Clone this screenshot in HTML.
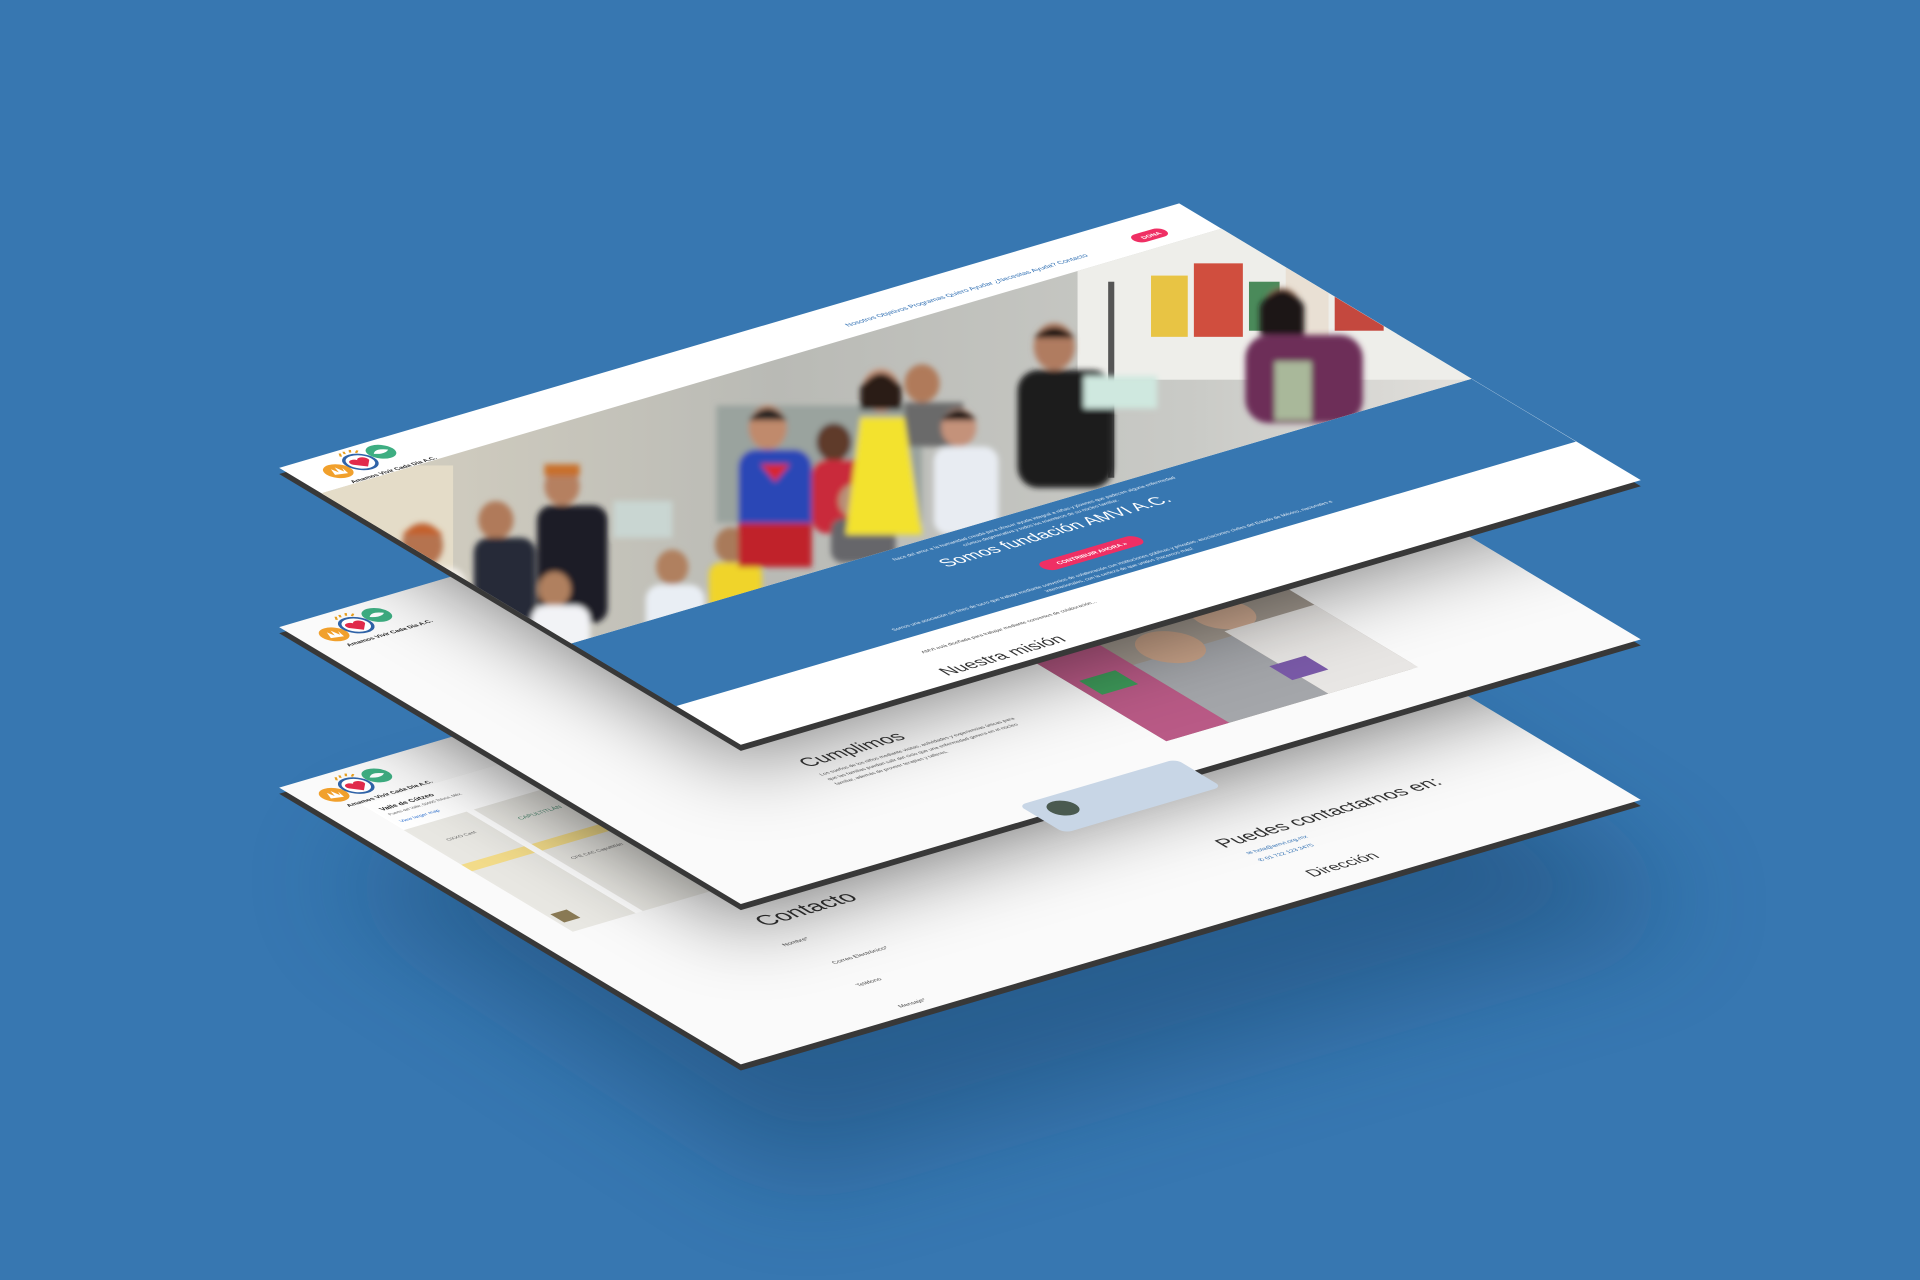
<!DOCTYPE html>
<html><head><meta charset="utf-8"><style>
html,body{margin:0;padding:0;width:1920px;height:1280px;overflow:hidden;background:#3777b1}
svg{display:block}
text{font-family:"Liberation Sans",sans-serif}
.nar{font-family:"Liberation Sans Narrow","Liberation Sans",sans-serif}
</style></head><body>
<svg width="1920" height="1280" viewBox="0 0 1568 1045" preserveAspectRatio="none" xmlns="http://www.w3.org/2000/svg">
<defs>
<filter id="b1" x="-30%" y="-30%" width="160%" height="160%"><feGaussianBlur stdDeviation="35"/></filter>
<filter id="b2" x="-30%" y="-30%" width="160%" height="160%"><feGaussianBlur stdDeviation="45"/></filter>
<filter id="b3"><feGaussianBlur stdDeviation="2"/></filter>
<clipPath id="cm"><polygon points="228,512 963,296 1340,522 605,738"/></clipPath>
<clipPath id="cb"><polygon points="228,643 963,427 1340,653 605,869"/></clipPath>
<clipPath id="cp"><polygon points="262.5,402.7 997.5,186.7 1201.6,309.3 466.6,525.3"/></clipPath>
<linearGradient id="ph" x1="0" y1="0" x2="1" y2="0"><stop offset="0" stop-color="#d8d2c2"/><stop offset=".4" stop-color="#b9bab5"/><stop offset=".75" stop-color="#c9cac6"/><stop offset="1" stop-color="#e2e0dc"/></linearGradient>
<g id="logo">
 <circle cx="22" cy="26" r="13" fill="#f1a02c"/>
 <path d="M15 30 l4 -10 l2 8 l3 -9 l2 10 l3 -6 l-2 10z" fill="#fff"/>
 <circle cx="50" cy="22" r="14" fill="#fff" stroke="#2f63a8" stroke-width="3"/>
 <path d="M50 32 l-9 -9 a5 5 0 0 1 9 -5 a5 5 0 0 1 9 5z" fill="#e22a4b"/>
 <path d="M42 6 l3 -5 M48 4 l2 -4 M54 4 l3 -4 M58 7 l4 -3" stroke="#e8a020" stroke-width="2"/>
 <circle cx="78" cy="16" r="13" fill="#3eae82"/>
 <path d="M70 16 q8 -8 16 0 q-8 6 -16 0" fill="#fff"/>
 <text x="18" y="50" font-size="7" font-weight="bold" fill="#222">Amamos Vivir Cada Día A.C.</text>
</g>
</defs>
<rect width="1568" height="1045" fill="#3777b1"/>
<polygon points="268,713 1003,497 1380,743 645,959" fill="#173f66" opacity=".45" filter="url(#b2)"/>

<!-- BOTTOM SHEET -->
<polygon points="228,648 963,432 1340,658 605,874" fill="#383838"/>
<polygon points="228,643 963,427 1340,653 605,869" fill="#fafafa"/>
<g transform="matrix(0.735,-0.216,0.628,0.377,228,643)">
 <use href="#logo" x="10" y="8"/>
 <rect x="40" y="60" width="170" height="275" fill="#e9e8e3"/>
 <rect x="40" y="190" width="170" height="14" fill="#f3dc8a"/>
 <rect x="110" y="60" width="8" height="275" fill="#fff"/>
 <rect x="40" y="60" width="170" height="55" fill="#fff"/>
 <text x="48" y="78" font-size="8" font-weight="bold" fill="#222">Valle de Cútzeo</text>
 <text x="48" y="88" font-size="5" fill="#555">Puerto del Valle, 50000 Toluca, Méx.</text>
 <text x="48" y="103" font-size="6" fill="#2a6fd0">View larger map</text>
 <text x="140" y="150" font-size="7" fill="#4a8a70">CAPULTITLÁN</text>
 <text x="130" y="230" font-size="6" fill="#666">CFE CAC Capultitlán</text>
 <text x="60" y="150" font-size="6" fill="#666">OXXO Cast</text>
 <rect x="45" y="300" width="18" height="18" fill="#8a7a55"/>
 <text x="190" y="410" font-size="26" class="nar" fill="#333">Contacto</text>
 <text x="180" y="447" font-size="7" fill="#444">Nombre*</text>
 <text x="195" y="494" font-size="7" fill="#444">Correo Electrónico*</text>
 <text x="185" y="537" font-size="7" fill="#444">Teléfono</text>
 <text x="190" y="586" font-size="7" fill="#444">Mensaje*</text>
 <text x="630" y="492" font-size="22" class="nar" fill="#333">Puedes contactarnos en:</text>
 <text x="640" y="512" font-size="7" fill="#2e6fb3">✉ hola@amvi.org.mx</text>
 <text x="640" y="527" font-size="7" fill="#2e6fb3">✆ 01 722 123 3475</text>
 <text x="660" y="572" font-size="18" class="nar" fill="#333">Dirección</text>
</g>
<g clip-path="url(#cb)"><polygon points="228,522 963,306 1340,532 605,748" fill="#000" opacity=".55" filter="url(#b1)"/></g>

<!-- MIDDLE SHEET -->
<polygon points="228,517 963,301 1340,527 605,743" fill="#383838"/>
<polygon points="228,512 963,296 1340,522 605,738" fill="#fafafa"/>
<g transform="matrix(0.735,-0.216,0.628,0.377,228,512)">
 <use href="#logo" x="10" y="8"/>
 <rect x="520" y="360" width="280" height="185" rx="8" fill="#a39a90"/>
 <rect x="520" y="360" width="70" height="185" fill="#b95a86"/>
 <rect x="530" y="420" width="40" height="30" fill="#3e9a5a"/>
 <rect x="590" y="420" width="110" height="125" fill="#a4a6aa"/>
 <circle cx="640" cy="410" r="30" fill="#caa48a"/>
 <circle cx="720" cy="385" r="28" fill="#d2ad94"/>
 <rect x="700" y="410" width="100" height="135" fill="#e8e6e4"/>
 <rect x="690" y="480" width="40" height="30" fill="#7a5aa8"/>
 <text x="250" y="350" font-size="22" class="nar" fill="#333">Nuestra misión</text>
 <text x="220" y="430" font-size="22" class="nar" fill="#333">Cumplimos</text>
 <text x="220" y="448" font-size="6" fill="#555">Los sueños de los niños mediante visitas, actividades y experiencias únicas para</text>
 <text x="220" y="458" font-size="6" fill="#555">que las familias puedan salir del ciclo que una enfermedad genera en el núcleo</text>
 <text x="220" y="468" font-size="6" fill="#555">familiar, además de proveer terapias y talleres.</text>
 <rect x="330" y="575" width="175" height="60" rx="8" fill="#c8d6e6"/>
 <circle cx="360" cy="598" r="14" fill="#4a5a50"/>
</g>
<g clip-path="url(#cm)"><polygon points="228,392 963,176 1340,402 605,618" fill="#000" opacity=".5" filter="url(#b1)"/></g>

<!-- TOP SHEET -->
<polygon points="228,387 963,171 1340,397 605,613" fill="#383838"/>
<polygon points="228,382 963,166 1340,392 605,608" fill="#fff"/>
<g transform="matrix(0.735,-0.216,0.628,0.377,228,382)">
 <use href="#logo" x="18" y="4"/>
 <text x="600" y="38" font-size="8" fill="#2f6fb3">Nosotros    Objetivos    Programas    Quiero Ayudar    ¿Necesitas Ayuda?    Contacto</text>
 <rect x="920" y="26" width="36" height="16" rx="8" fill="#ef2f64"/>
 <text x="929" y="37" font-size="7" fill="#fff" font-weight="bold">DONA</text>
 <rect x="0" y="380" width="1000" height="136" fill="#3777b1"/>
 <text x="500" y="398" font-size="6" fill="#e8eef6" text-anchor="middle">Nace del amor a la humanidad creada para ofrecer ayuda integral a niñas y jóvenes que padecen alguna enfermedad</text>
 <text x="500" y="407" font-size="6" fill="#e8eef6" text-anchor="middle">crónico-degenerativa y todos los miembros de su núcleo familiar.</text>
 <text x="500" y="430" font-size="20" class="nar" fill="#fff" text-anchor="middle">Somos fundación AMVI A.C.</text>
 <rect x="445" y="462" width="110" height="18" rx="9" fill="#ef2f64"/>
 <text x="500" y="474" font-size="7" fill="#fff" text-anchor="middle" font-weight="bold">CONTRIBUIR AHORA »</text>
 <text x="500" y="500" font-size="6" fill="#e8eef6" text-anchor="middle">Somos una asociación sin fines de lucro que trabaja mediante convenios de colaboración con instituciones públicas y privadas, asociaciones civiles del Estado de México, nacionales e</text>
 <text x="500" y="509" font-size="6" fill="#e8eef6" text-anchor="middle">internacionales, con la certeza de que unidos ¡hacemos más!</text>
 <text x="250" y="545" font-size="6" fill="#444">AMVI está diseñada para trabajar mediante convenios de colaboración...</text>
 <text x="240" y="588" font-size="20" class="nar" fill="#333">Nuestra misión</text>
</g>
<g clip-path="url(#cp)">
 <rect x="250" y="180" width="960" height="350" fill="url(#ph)"/>
 <rect x="250" y="380" width="120" height="150" fill="#e4dcc8"/>
 <rect x="880" y="180" width="330" height="130" fill="#eeeeea"/>
 <rect x="940" y="225" width="30" height="50" fill="#e8c444"/>
 <rect x="975" y="215" width="40" height="60" fill="#d04e3e"/>
 <rect x="1020" y="230" width="25" height="40" fill="#4a8a5a"/>
 <rect x="1050" y="205" width="35" height="70" fill="#e9e0d4"/>
 <rect x="1090" y="200" width="40" height="70" fill="#c4483e"/>
 <rect x="905" y="230" width="5" height="160" fill="#555"/>
 <g filter="url(#b3)" transform="matrix(1.2,0,0,1.2,-15,-65)">
 <rect x="500" y="330" width="140" height="80" fill="#9aa39e"/>
 <ellipse cx="300" cy="425" rx="14" ry="15" fill="#b5734f"/><path d="M286 418 q14 -14 28 0z" fill="#c4602a"/>
 <rect x="282" y="440" width="48" height="50" rx="12" fill="#f2eee8"/>
 <rect x="288" y="485" width="40" height="45" fill="#1a1a1e"/>
 <ellipse cx="350" cy="408" rx="12" ry="13" fill="#b07a5a"/>
 <rect x="335" y="420" width="42" height="70" rx="10" fill="#262a38"/>
 <ellipse cx="395" cy="385" rx="12" ry="13" fill="#b58060"/><rect x="383" y="370" width="24" height="8" fill="#c8702a"/>
 <rect x="378" y="398" width="48" height="80" rx="10" fill="#1e1f25"/>
 <ellipse cx="390" cy="455" rx="11" ry="12" fill="#b0805e"/>
 <rect x="374" y="466" width="40" height="60" rx="10" fill="#f2f3f6"/>
 <rect x="430" y="395" width="40" height="25" fill="#c9d6d2"/>
 <ellipse cx="470" cy="440" rx="11" ry="12" fill="#b0805e"/>
 <rect x="452" y="452" width="40" height="55" rx="10" fill="#e9eef4"/>
 <ellipse cx="510" cy="425" rx="11" ry="12" fill="#a97a5a"/>
 <rect x="495" y="437" width="36" height="45" rx="8" fill="#f0d42c"/>
 <ellipse cx="535" cy="345" rx="13" ry="15" fill="#c08a6c"/><path d="M522 340 q13 -16 26 0z" fill="#222"/>
 <rect x="515" y="360" width="50" height="70" rx="12" fill="#2a46b6"/>
 <path d="M530 370 l20 0 l-10 12z" fill="#d8262f"/>
 <rect x="515" y="410" width="50" height="30" fill="#c0232c"/>
 <ellipse cx="580" cy="355" rx="12" ry="13" fill="#5e3a2c"/>
 <rect x="565" y="367" width="38" height="50" rx="10" fill="#c9293a"/>
 <ellipse cx="595" cy="395" rx="12" ry="12" fill="#b89078"/>
 <rect x="578" y="407" width="44" height="30" rx="8" fill="#66666a"/>
 <ellipse cx="640" cy="315" rx="12" ry="13" fill="#b07a5a"/>
 <rect x="628" y="328" width="40" height="30" fill="#6b6b6b"/>
 <ellipse cx="612" cy="320" rx="13" ry="15" fill="#c8947a"/><path d="M598 318 q14 -20 28 0 l0 15 l-28 0z" fill="#2a1a14"/>
 <path d="M598 338 l30 0 l12 80 l-52 0z" fill="#f3e22f"/>
 <ellipse cx="665" cy="345" rx="12" ry="13" fill="#c4927a"/><path d="M653 340 q12 -14 24 0z" fill="#111"/>
 <rect x="648" y="358" width="44" height="60" rx="10" fill="#e8ecf2"/>
 <ellipse cx="730" cy="290" rx="14" ry="16" fill="#b07c60"/><path d="M716 284 q14 -14 28 0z" fill="#111"/>
 <rect x="705" y="306" width="65" height="80" rx="14" fill="#1c1c1f"/>
 <rect x="750" y="310" width="50" height="22" fill="#cfe8df"/>
 <ellipse cx="885" cy="265" rx="13" ry="15" fill="#b9876b"/><path d="M870 262 q15 -22 30 0 l0 20 l-30 0z" fill="#1a1412"/>
 <rect x="860" y="282" width="80" height="60" rx="16" fill="#6d2d58"/>
 <rect x="880" y="300" width="25" height="40" fill="#a9b89a"/>
 </g>
</g>
</svg>
</body></html>
